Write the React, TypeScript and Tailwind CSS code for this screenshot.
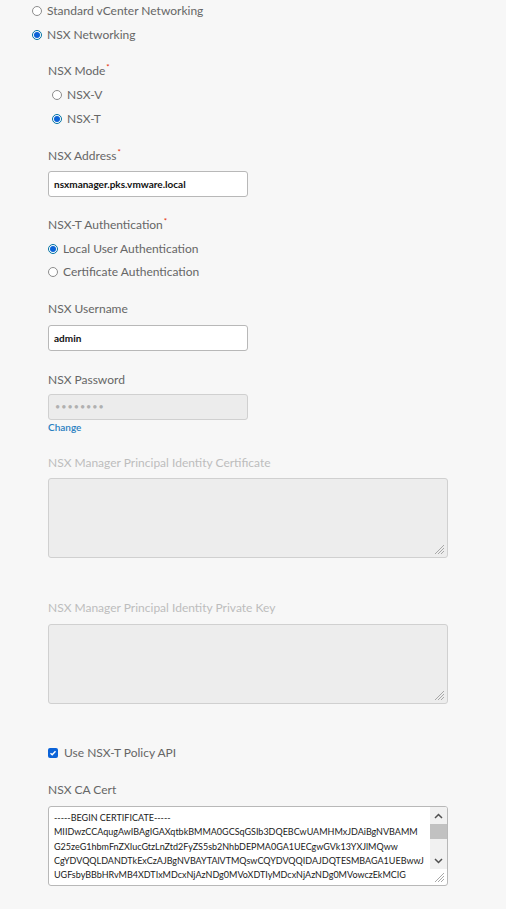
import React from 'react'

const font = { fontFamily: 'Lato, "Open Sans", sans-serif' }

function Radio({ checked, label }: { checked?: boolean; label: string }) {
  return (
    <div className="flex items-center h-6 gap-[5px]">
      {checked ? (
        <span className="w-[10px] h-[10px] rounded-full border border-[#0072a3] bg-white flex items-center justify-center">
          <span className="w-[6px] h-[6px] rounded-full bg-[#0b63d8]" />
        </span>
      ) : (
        <span className="w-[10px] h-[10px] rounded-full border border-[#8c8c8c] bg-white" />
      )}
      <span className="text-[12px] text-[#666]">{label}</span>
    </div>
  )
}

function Label({ text, required, disabled }: { text: string; required?: boolean; disabled?: boolean }) {
  return (
    <div className={`text-[12px] leading-4 ${disabled ? 'text-[#bdbdbd]' : 'text-[#666]'}`}>
      {text}
      {required && <sup className="text-[#e62700] text-[8px] top-[-5px] ml-px">*</sup>}
    </div>
  )
}

function Grip() {
  return (
    <svg className="absolute right-[2px] bottom-[2px]" width="12" height="12" viewBox="0 0 12 12">
      <path d="M11 2 L2 11 M11 5 L5 11 M11 8 L8 11" stroke="#a8a8a8" strokeWidth="1" fill="none" />
    </svg>
  )
}

const cert = [
  '-----BEGIN CERTIFICATE-----',
  'MIIDwzCCAqugAwIBAgIGAXqtbkBMMA0GCSqGSIb3DQEBCwUAMHMxJDAiBgNVBAMM',
  'G25zeG1hbmFnZXIucGtzLnZtd2FyZS5sb2NhbDEPMA0GA1UECgwGVk13YXJlMQww',
  'CgYDVQQLDANDTkExCzAJBgNVBAYTAlVTMQswCQYDVQQIDAJDQTESMBAGA1UEBwwJ',
  'UGFsbyBBbHRvMB4XDTIxMDcxNjAzNDg0MVoXDTIyMDcxNjAzNDg0MVowczEkMCIG',
]

export default function App() {
  return (
    <div className="min-h-[910px] w-[506px] bg-[#f7f7f7] pl-[32px]" style={font}>
      <div className="-mt-px">
        <Radio label="Standard vCenter Networking" />
        <Radio checked label="NSX Networking" />
      </div>

      <div className="pl-[16px]">
        <div className="mt-[16px]">
          <Label text="NSX Mode" required />
        </div>
        <div className="mt-[4px] pl-[4px]">
          <Radio label="NSX-V" />
          <Radio checked label="NSX-T" />
        </div>

        <div className="mt-[17px]">
          <Label text="NSX Address" required />
        </div>
        <div className="mt-[7px] w-[200px] h-[26px] bg-white border border-[#b8b8b8] rounded-[3px] flex items-center px-[5px] text-[10px] font-bold text-[#111]">
          nsxmanager.pks.vmware.local
        </div>

        <div className="mt-[20px]">
          <Label text="NSX-T Authentication" required />
        </div>
        <div className="mt-[4px]">
          <div className="h-[23px] flex items-center">
            <Radio checked label="Local User Authentication" />
          </div>
          <div className="h-[23px] flex items-center">
            <Radio label="Certificate Authentication" />
          </div>
        </div>

        <div className="mt-[18px]">
          <Label text="NSX Username" />
        </div>
        <div className="mt-[8px] w-[200px] h-[26px] bg-white border border-[#b8b8b8] rounded-[3px] flex items-center px-[5px] text-[10px] font-bold text-[#111]">
          admin
        </div>

        <div className="mt-[21px]">
          <Label text="NSX Password" />
        </div>
        <div className="mt-[6px] w-[200px] h-[26px] bg-[#ececec] border border-[#d0d0d0] rounded-[3px] flex items-center px-[6px] text-[9px] tracking-[1px] text-[#b0b0b0]">
          ••••••••
        </div>
        <div className="mt-px text-[10px] leading-3 font-semibold text-[#2a7fc1]">Change</div>

        <div className="mt-[22px]">
          <Label text="NSX Manager Principal Identity Certificate" disabled />
        </div>
        <div className="relative mt-[7px] w-[400px] h-[80px] bg-[#ededed] border border-[#d0d0d0] rounded-[3px]">
          <Grip />
        </div>

        <div className="mt-[42px]">
          <Label text="NSX Manager Principal Identity Private Key" disabled />
        </div>
        <div className="relative mt-[8px] w-[400px] h-[80px] bg-[#ededed] border border-[#d0d0d0] rounded-[3px]">
          <Grip />
        </div>

        <div className="mt-[41px] h-4 flex items-center gap-[6px]">
          <span className="w-[10px] h-[10px] rounded-[2px] bg-[#0b63d8] flex items-center justify-center">
            <svg width="8" height="8" viewBox="0 0 8 8">
              <path d="M1.5 4.2 L3.2 5.8 L6.5 2.2" stroke="#fff" strokeWidth="1.4" fill="none" />
            </svg>
          </span>
          <span className="text-[12px] text-[#666]">Use NSX-T Policy API</span>
        </div>

        <div className="mt-[21px]">
          <Label text="NSX CA Cert" />
        </div>
        <div className="relative mt-[8px] w-[400px] h-[80px] bg-white border border-[#b8b8b8] rounded-[3px] flex overflow-hidden">
          <div className="flex-1 pl-[5px] pt-[4px] text-[9px] leading-[14.3px] text-[#1a1a1a] whitespace-nowrap overflow-hidden">
            {cert.map((l) => (
              <div key={l}>{l}</div>
            ))}
          </div>
          <div className="w-[17px] flex flex-col bg-[#f1f1f1] h-[62px]">
            <div className="h-[17px] flex items-center justify-center">
              <svg width="9" height="6" viewBox="0 0 9 6">
                <path d="M1 5 L4.5 1.5 L8 5" stroke="#505050" strokeWidth="1.5" fill="none" />
              </svg>
            </div>
            <div className="h-[15px] bg-[#c1c1c1]" />
            <div className="flex-1" />
            <div className="h-[17px] flex items-center justify-center">
              <svg width="9" height="6" viewBox="0 0 9 6">
                <path d="M1 1 L4.5 4.5 L8 1" stroke="#505050" strokeWidth="1.5" fill="none" />
              </svg>
            </div>
          </div>
          <Grip />
        </div>
      </div>
    </div>
  )
}
